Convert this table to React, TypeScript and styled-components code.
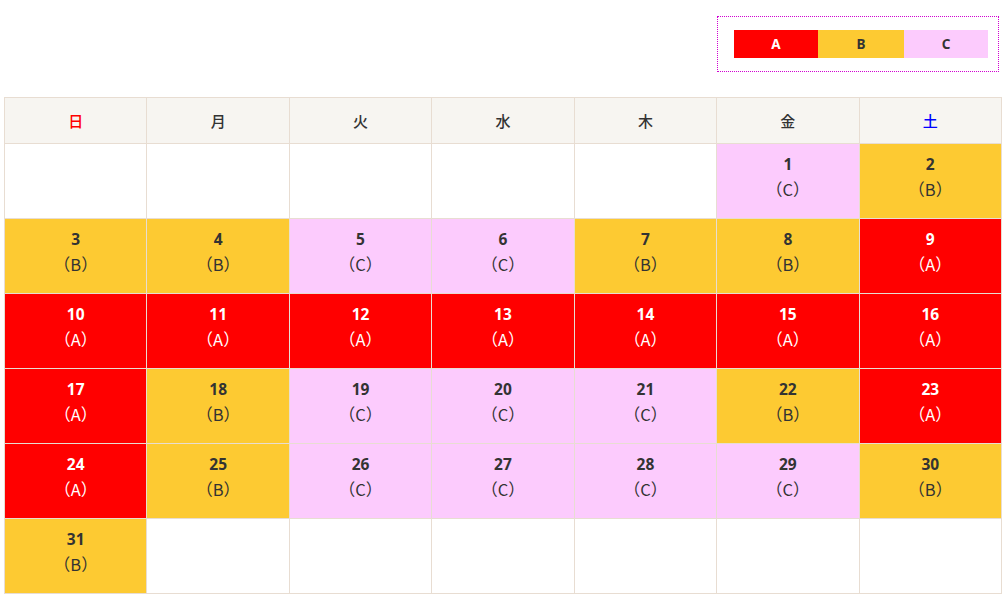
import React from "react";
import styled, {createGlobalStyle} from "styled-components";

const GlobalStyle = createGlobalStyle`
  html, body {
    margin: 0;
    padding: 0;
    background: #fff;
  }
  body {
    font-family: "Noto Sans", "Noto Sans CJK JP", sans-serif;
    color: #333;
  }
`

type Kind = "A" | "B" | "C"

const COLORS: Record<Kind, {bg: string, fg: string}> = {
    A: {bg: "#ff0000", fg: "#ffffff"},
    B: {bg: "#fdca32", fg: "#333333"},
    C: {bg: "#fccbfd", fg: "#333333"},
}

const Page = styled.div`
  padding: 16px 3px 0 4px;
  width: 998px;
`

const LegendRow = styled.div`
  display: flex;
  justify-content: flex-end;
  margin: 0 3px 25px 0;
`

const LegendBox = styled.div`
  border: 1px dotted #d100d1;
  padding: 13px 10px 13px 16px;
  display: flex;
`

const LegendItem = styled.div<{ $kind: Kind, $w: number }>`
  width: ${p => p.$w}px;
  height: 28px;
  display: flex;
  align-items: center;
  justify-content: center;
  background: ${p => COLORS[p.$kind].bg};
  color: ${p => COLORS[p.$kind].fg};
  font-size: 13.5px;
  font-weight: 700;
`

const Table = styled.table`
  width: 998px;
  table-layout: fixed;
  border-collapse: collapse;
`

const HeadCell = styled.th<{ $color: string }>`
  height: 45px;
  padding: 0;
  background: #f7f5f1;
  border: 1px solid #e8ddd2;
  color: ${p => p.$color};
  font-family: "Noto Sans CJK JP", sans-serif;
  font-size: 15px;
  font-weight: 500;
  text-align: center;
`

const DayCell = styled.td<{ $kind?: Kind }>`
  height: 68px;
  padding: 0 0 6px;
  border: 1px solid #e8ddd2;
  background: ${p => p.$kind ? COLORS[p.$kind].bg : "#fff"};
  color: ${p => p.$kind ? COLORS[p.$kind].fg : "#333"};
  text-align: center;
  vertical-align: middle;
`

const DayNum = styled.div`
  font-size: 15.5px;
  font-weight: 700;
  line-height: 22px;
`

const DayLabel = styled.div`
  font-family: "Noto Sans CJK JP", sans-serif;
  font-size: 16.5px;
  font-weight: 400;
  line-height: 29px;
`

const HEADS = [
    {t: "日", c: "#ff0000"},
    {t: "月", c: "#333"},
    {t: "火", c: "#333"},
    {t: "水", c: "#333"},
    {t: "木", c: "#333"},
    {t: "金", c: "#333"},
    {t: "土", c: "#0000ff"},
]

const KINDS: Kind[] = (
    "CB" +
    "BBCCBBA" +
    "AAAAAAA" +
    "ABCCCBA" +
    "ABCCCCB" +
    "B"
).split("") as Kind[]

export default function App() {
    const cells: ({ day: number, kind: Kind } | null)[] = []
    for (let i = 0; i < 5; i++) cells.push(null)
    KINDS.forEach((k, i) => cells.push({day: i + 1, kind: k}))
    while (cells.length % 7) cells.push(null)

    const rows = []
    for (let r = 0; r < cells.length / 7; r++) rows.push(cells.slice(r * 7, r * 7 + 7))

    return <Page>
        <GlobalStyle/>
        <LegendRow>
            <LegendBox>
                <LegendItem $kind="A" $w={84}>A</LegendItem>
                <LegendItem $kind="B" $w={86}>B</LegendItem>
                <LegendItem $kind="C" $w={84}>C</LegendItem>
            </LegendBox>
        </LegendRow>
        <Table>
            <thead>
            <tr>
                {HEADS.map(h => <HeadCell key={h.t} $color={h.c}>{h.t}</HeadCell>)}
            </tr>
            </thead>
            <tbody>
            {rows.map((row, r) => <tr key={r}>
                {row.map((c, i) => c
                    ? <DayCell key={i} $kind={c.kind}>
                        <DayNum>{c.day}</DayNum>
                        <DayLabel>（{c.kind}）</DayLabel>
                    </DayCell>
                    : <DayCell key={i}/>)}
            </tr>)}
            </tbody>
        </Table>
    </Page>
}
